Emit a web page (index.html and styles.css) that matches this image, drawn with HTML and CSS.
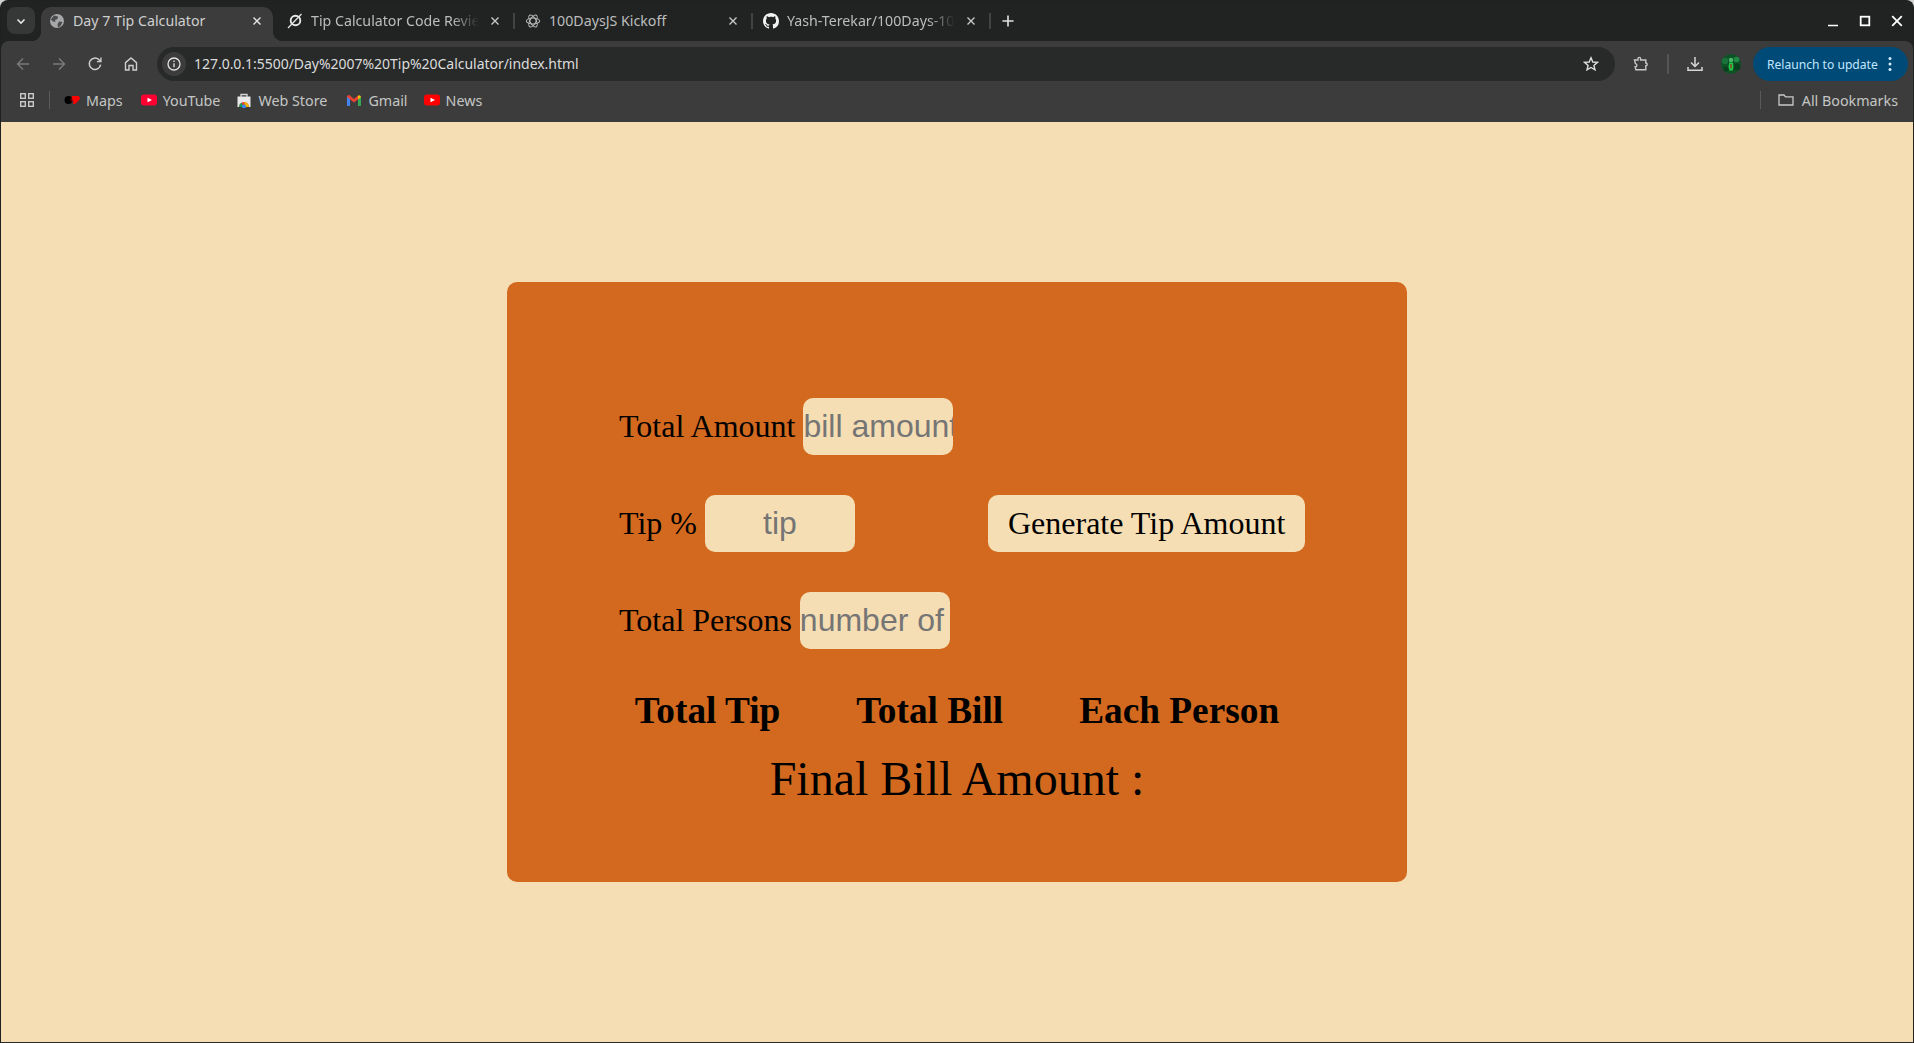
FILE: index.html
```html
<!DOCTYPE html>
<html lang="en">
<head>
<meta charset="utf-8">
<title>Day 7 Tip Calculator</title>
<link rel="stylesheet" href="styles.css">
</head>
<body>
<div class="window">
  <header class="tabstrip">
    <button class="tab-menu" aria-label="Search tabs">
      <svg class="ico12" viewBox="0 0 12 12"><path d="M2.5 4.500 6 8l3.500-3.500" fill="none" stroke="#e3e3e3" stroke-width="1.6"/></svg>
    </button>
    <div class="tabs">
      <div class="tab tab-active">
        <svg class="ico16" viewBox="0 0 16 16"><circle cx="8" cy="8" r="7" fill="#a6a8aa"/><path d="M5 2.500 9 3.500 8.500 6 6 7 6.500 9 4 8.500 1.800 6.500ZM10 8.500l3.500.5-2 4-2.500 1.500-.5-3Z" fill="#4a4c4e"/></svg>
        <span class="tab-title">Day 7 Tip Calculator</span>
        <svg class="ico16" viewBox="0 0 16 16"><path d="M4.500 4.500l7 7m0-7-7 7" stroke="#e3e3e3" stroke-width="1.4"/></svg>
      </div>
      <span class="tab-sep tab-sep-hidden"></span>
      <div class="tab">
        <svg class="ico16" viewBox="0 0 16 16"><circle cx="8.500" cy="7.500" r="4.800" fill="none" stroke="#e6e6e6" stroke-width="1.9"/><path d="M1 15 14.500 1" stroke="#e6e6e6" stroke-width="1.2"/></svg>
        <span class="tab-title tab-fade">Tip Calculator Code Review</span>
        <svg class="ico16" viewBox="0 0 16 16"><path d="M4.500 4.500l7 7m0-7-7 7" stroke="#c8c8c8" stroke-width="1.4"/></svg>
      </div>
      <span class="tab-sep"></span>
      <div class="tab">
        <svg class="ico16" viewBox="0 0 16 16" fill="none" stroke="#b9b9b9" stroke-width="1.1"><ellipse cx="8" cy="8" rx="6.600" ry="3"/><ellipse cx="8" cy="8" rx="6.600" ry="3" transform="rotate(60 8 8)"/><ellipse cx="8" cy="8" rx="6.600" ry="3" transform="rotate(120 8 8)"/></svg>
        <span class="tab-title">100DaysJS Kickoff</span>
        <svg class="ico16" viewBox="0 0 16 16"><path d="M4.500 4.500l7 7m0-7-7 7" stroke="#c8c8c8" stroke-width="1.4"/></svg>
      </div>
      <span class="tab-sep"></span>
      <div class="tab">
        <svg class="ico16" viewBox="0 0 16 16"><path fill="#f2f2f2" d="M8 0C3.58 0 0 3.58 0 8c0 3.54 2.29 6.53 5.47 7.59.4.07.55-.17.55-.38 0-.19-.01-.82-.01-1.49-2.01.37-2.53-.49-2.69-.94-.09-.23-.48-.94-.82-1.13-.28-.15-.68-.52-.01-.53.63-.01 1.08.58 1.23.82.72 1.21 1.87.87 2.33.66.07-.52.28-.87.51-1.07-1.78-.2-3.64-.89-3.64-3.95 0-.87.31-1.59.82-2.15-.08-.2-.36-1.02.08-2.12 0 0 .67-.21 2.2.82.64-.18 1.32-.27 2-.27.68 0 1.36.09 2 .27 1.53-1.04 2.2-.82 2.2-.82.44 1.1.16 1.92.08 2.12.51.56.82 1.27.82 2.15 0 3.07-1.87 3.75-3.65 3.95.29.25.54.73.54 1.48 0 1.07-.01 1.93-.01 2.2 0 .21.15.46.55.38A8.013 8.013 0 0016 8c0-4.420-3.580-8-8-8z"/></svg>
        <span class="tab-title tab-fade">Yash-Terekar/100Days-100Projects</span>
        <svg class="ico16" viewBox="0 0 16 16"><path d="M4.500 4.500l7 7m0-7-7 7" stroke="#c8c8c8" stroke-width="1.4"/></svg>
      </div>
      <span class="tab-sep"></span>
      <svg class="ico16 new-tab" viewBox="0 0 16 16"><path d="M8 2.500v11M2.500 8h11" stroke="#e3e3e3" stroke-width="1.6"/></svg>
    </div>
    <div class="win-controls">
      <svg class="ico16" viewBox="0 0 16 16"><path d="M3 12.500h10" stroke="#fff" stroke-width="1.6"/></svg>
      <svg class="ico16" viewBox="0 0 16 16"><rect x="3.700" y="3.700" width="8.600" height="8.600" fill="none" stroke="#fff" stroke-width="1.8"/></svg>
      <svg class="ico16" viewBox="0 0 16 16"><path d="M3.200 3.200l9.600 9.600m0-9.600-9.600 9.600" stroke="#fff" stroke-width="1.8"/></svg>
    </div>
  </header>

  <nav class="toolbar">
    <span class="tool"><svg class="ico16" viewBox="0 0 16 16" fill="none" stroke="#7b7b7b" stroke-width="1.4"><path d="M14 8H2.500M8 2.500 2.500 8 8 13.500"/></svg></span>
    <span class="tool"><svg class="ico16" viewBox="0 0 16 16" fill="none" stroke="#7b7b7b" stroke-width="1.4"><path d="M2 8h11.500M8 2.500 13.500 8 8 13.500"/></svg></span>
    <span class="tool"><svg class="ico16" viewBox="0 0 16 16" fill="none" stroke="#cfcfcf" stroke-width="1.5"><path d="M13.600 8.600A5.700 5.700 0 1 1 11.800 3.600L13.600 5"/><path d="M13.900 1.600v4h-4" stroke-width="1.4"/></svg></span>
    <span class="tool"><svg class="ico16" viewBox="0 0 16 16" fill="none" stroke="#cfcfcf" stroke-width="1.4"><path d="M2.500 14V6.600L8 2l5.500 4.600V14H10V9.500H6V14Z"/></svg></span>
    <div class="omnibox">
      <span class="site-info"><svg class="ico16" viewBox="0 0 16 16" fill="none" stroke="#e3e3e3" stroke-width="1.3"><circle cx="8" cy="8" r="6"/><path d="M8 7.200v4M8 4.600v1.400"/></svg></span>
      <span class="url">127.0.0.1:5500/Day%2007%20Tip%20Calculator/index.html</span>
      <svg class="ico16" viewBox="0 0 16 16"><path d="M8 1.800 9.800 6l4.600.4-3.500 3 1.100 4.500L8 11.500 4 13.900l1.100-4.500-3.500-3L6.200 6Z" fill="none" stroke="#dcdcdc" stroke-width="1.4"/></svg>
    </div>
    <span class="tool tool-ext"><svg class="ico16" viewBox="0 0 16 16" fill="none" stroke="#c8c8c8" stroke-width="1.4"><path d="M1.500 4H5V2.700a1.300 1.300 0 0 1 2.600 0V4h5.200v3a1.400 1.400 0 0 1 0 2.800v4H2.800l-.6-3a1.600 1.600 0 0 0 .2-3.200Z"/></svg></span>
    <span class="tool-sep"></span>
    <span class="tool"><svg class="ico16" viewBox="0 0 16 16" fill="none" stroke="#d6d6d6" stroke-width="1.5"><path d="M8 1v8.800M4 6.500l4 4 4-4M1 11v3.200h14V11"/></svg></span>
    <span class="tool"><svg class="avatar" viewBox="0 0 20 20"><circle cx="10" cy="10" r="10" fill="#0e5226"/><circle cx="4" cy="7" r="3.200" fill="#17733a"/><circle cx="16" cy="13" r="3.500" fill="#0a3f1e"/><circle cx="15.500" cy="5.500" r="2.800" fill="#1f8a45"/><circle cx="5" cy="15" r="2.500" fill="#0a3f1e"/><circle cx="10" cy="6" r="2.200" fill="#4ab86c"/><path d="M8.300 8.500h3.400l.8 4.500-1 3.500h-3l-1-3.500Z" fill="#1fcf47"/><path d="M9.300 10h1.400v4.500H9.300Z" fill="#8f3a2a"/></svg></span>
    <div class="relaunch">
      <span>Relaunch to update</span>
      <svg class="ico16" viewBox="0 0 16 16"><circle cx="8" cy="2.500" r="1.500" fill="#d6ecff"/><circle cx="8" cy="8" r="1.500" fill="#d6ecff"/><circle cx="8" cy="13.500" r="1.500" fill="#d6ecff"/></svg>
    </div>
  </nav>

  <nav class="bookmarks">
    <svg class="ico16 apps" viewBox="0 0 16 16" fill="none" stroke="#c8c8c8" stroke-width="1.400"><rect x="1.700" y="1.700" width="4.600" height="4.600"/><rect x="9.700" y="1.700" width="4.600" height="4.600"/><rect x="1.700" y="9.700" width="4.600" height="4.600"/><rect x="9.700" y="9.700" width="4.600" height="4.600"/></svg>
    <span class="bm-sep"></span>
    <a class="bm bm-maps"><svg class="ico16" viewBox="0 0 16 16"><circle cx="4.500" cy="8" r="4" fill="#000"/><path d="M8 4h6a2.500 2.500 0 0 1 1.500 3.500L11 12H9l.5-3H7Z" fill="#f00"/><path d="M6.500 6.500h2v3h-2Z" fill="#600"/></svg>Maps</a>
    <a class="bm bm-yt"><svg class="ico16" viewBox="0 0 16 16"><rect y="2.500" width="16" height="11" rx="3" fill="#ff0033"/><path d="M6.500 5.700 11 8l-4.500 2.300Z" fill="#fff"/></svg>YouTube</a>
    <a class="bm bm-store"><svg class="ico16" viewBox="0 0 16 16"><path d="M1.500 4.500h13V15h-13Z" fill="#e8e8e8"/><path d="M5 5V2.500h6V5" fill="none" stroke="#d8d8d8" stroke-width="1.300"/><path d="M3 15a5 5 0 0 1 10 0Z" fill="#db4437"/><path d="M8 10a5 5 0 0 1 5 5H9.500Z" fill="#f4b400"/><path d="M3 15a5 5 0 0 1 2.500-4.300L7.500 15Z" fill="#0f9d58"/><circle cx="8" cy="14.500" r="2" fill="#4285f4"/></svg>Web Store</a>
    <a class="bm bm-gmail"><svg class="ico16" viewBox="0 0 16 16"><path d="M1 4.500h3V14H2a1 1 0 0 1-1-1Z" fill="#4285f4"/><path d="M12 14V4.500h3V13a1 1 0 0 1-1 1Z" fill="#34a853"/><path d="M1 5a1.800 1.800 0 0 1 3-1.400L8 7l4-3.400 .5 3.400L8 10.500 1 5Z" fill="#ea4335"/><path d="M12 3.700A1.800 1.800 0 0 1 15 5L12 7.500Z" fill="#fbbc04"/></svg>Gmail</a>
    <a class="bm bm-news"><svg class="ico16" viewBox="0 0 16 16"><rect y="2.500" width="16" height="11" rx="3" fill="#f00"/><path d="M6.500 5.700 11 8l-4.500 2.300Z" fill="#fff"/></svg>News</a>
    <span class="bm-sep bm-sep-right"></span>
    <a class="bm bm-all"><svg class="ico16" viewBox="0 0 16 16"><path d="M1 13V3h5l1.500 1.800H15V13Z" fill="none" stroke="#c8c8c8" stroke-width="1.300"/></svg>All Bookmarks</a>
  </nav>

  <main class="page">
    <section class="card">
      <div class="row">
        <label class="field-label" for="bill">Total Amount</label>
        <input class="field" id="bill" type="text" placeholder="bill amount">
      </div>
      <div class="row">
        <label class="field-label" for="tip">Tip %</label>
        <input class="field" id="tip" type="text" placeholder="tip">
        <button class="generate">Generate Tip Amount</button>
      </div>
      <div class="row">
        <label class="field-label" for="persons">Total Persons</label>
        <input class="field" id="persons" type="text" placeholder="number of persons">
      </div>
      <div class="totals">
        <h2 class="total">Total Tip</h2>
        <h2 class="total">Total Bill</h2>
        <h2 class="total">Each Person</h2>
      </div>
      <p class="final">Final Bill Amount :</p>
    </section>
  </main>
</div>
</body>
</html>
```
FILE: styles.css
```css
* { box-sizing: border-box; }
html, body { height: 100%; margin: 0; }
body { background: #d0d0d0; overflow: hidden; }

.window {
  height: 1043px;
  display: flex;
  flex-direction: column;
  border: 1px solid #1f2120;
  border-bottom-color: #2a2a2a;
  border-radius: 8px 8px 0 0;
  overflow: hidden;
  background: #202322;
  font-family: "Noto Sans", sans-serif;
  font-size: 14.2px;
  color: #c7c7c7;
}
.ico12 { width: 12px; height: 12px; flex: none; display: block; }
.ico16 { width: 16px; height: 16px; flex: none; display: block; }

/* tab strip */
.tabstrip { height: 40px; flex: none; display: flex; align-items: flex-end; padding-left: 6px; background: #202322; }
.tab-menu {
  width: 28px; height: 27px; margin-bottom: 7px; padding: 0; border: 0; border-radius: 8px;
  background: #363837; display: flex; align-items: center; justify-content: center;
}
.tabs { display: flex; align-items: center; height: 34px; margin-left: 6px; }
.tab { width: 232px; height: 34px; display: flex; align-items: center; gap: 8px; padding: 0 8px 6px; position: relative; color: #bdbdbd; }
.tab-title { flex: 1; min-width: 0; white-space: nowrap; overflow: hidden; margin-bottom: 1px; }
.tab-fade { -webkit-mask-image: linear-gradient(90deg, #000 84%, transparent 100%); mask-image: linear-gradient(90deg, #000 84%, transparent 100%); }
.tab-active { background: #3c3c3c; border-radius: 10px 10px 0 0; color: #cfcfcf; }
.tab-active::before, .tab-active::after {
  content: ""; position: absolute; bottom: 0; width: 10px; height: 10px;
}
.tab-active::before { left: -10px; background: radial-gradient(circle at 0 0, transparent 10px, #3c3c3c 10.5px); }
.tab-active::after { right: -10px; background: radial-gradient(circle at 100% 0, transparent 10px, #3c3c3c 10.5px); }
.tab-sep { width: 2px; height: 16px; margin: 0 2px 6px; background: #424443; flex: none; }
.tab-sep-hidden { background: transparent; }
.new-tab { margin: 0 0 6px 7px; }
.win-controls { margin-left: auto; height: 34px; margin-bottom: 3px; display: flex; align-items: center; gap: 16px; padding-right: 8px; }

/* toolbar */
.toolbar { height: 46px; flex: none; display: flex; align-items: center; padding: 0 5px 0 4px; background: #3c3c3c; border-radius: 8px 8px 0 0; }
.tool { width: 36px; height: 34px; flex: none; display: flex; align-items: center; justify-content: center; }
.tool-ext { margin-left: 8px; }
.tool-sep { width: 2px; height: 20px; margin: 0 8px; background: #555; flex: none; }
.omnibox {
  flex: 1; min-width: 0; height: 34px; margin-left: 8px; padding: 0 16px 0 5px;
  display: flex; align-items: center; border-radius: 17px; background: #282a29;
}
.site-info { width: 24px; height: 24px; flex: none; display: flex; align-items: center; justify-content: center; border-radius: 50%; background: #3c3c3c; }
.url { margin-left: 8px; flex: 1; color: #dcdcdc; font-size: 14px; margin-bottom: 1px; letter-spacing: -0.03px; }
.avatar { width: 20px; height: 20px; display: block; }
.relaunch {
  width: 155px; height: 34px; margin-left: 4px; flex: none; padding: 0 10px 0 14px;
  display: flex; align-items: center; justify-content: space-between;
  border-radius: 17px; background: #004a77; color: #c2e7ff; font-size: 12.1px;
}

/* bookmarks */
.bookmarks { height: 35px; flex: none; display: flex; align-items: center; padding: 0 15px 9px 18px; background: #3c3c3c; font-size: 14.3px; }
.apps { margin-right: 14px; }
.bm-sep { width: 1px; height: 18px; background: #5a5a5a; flex: none; }
.bm { display: flex; align-items: center; gap: 6px; color: #c4c7c5; white-space: nowrap; }
.bm-maps { margin-left: 14px; }
.bm-yt { margin-left: 18px; }
.bm-store { margin-left: 16px; }
.bm-gmail { margin-left: 19px; }
.bm-news { margin-left: 16px; }
.bm-sep-right { margin-left: auto; }
.bm-all { margin-left: 17px; gap: 8px; }

/* page */
.page { flex: 1; min-height: 0; display: flex; align-items: center; justify-content: center; background: #f5deb3; }
.card {
  width: 900px; height: 600px; padding: 116px 0 0;
  border-radius: 10px; background: #d2691e; color: #000;
  font-family: "Liberation Serif", serif;
}
.row { display: flex; align-items: center; gap: 8px; padding-left: 112px; margin-bottom: 40px; font-size: 32px; }
.field-label { font-size: 32px; }
.field {
  width: 150px; height: 57px; padding: 0; border: 0; border-radius: 10px;
  background: #f5deb3; text-align: center;
  font-family: "Liberation Sans", sans-serif; font-size: 32px;
}
.generate {
  height: 57px; margin-left: 125px; padding: 0 20px; border: 0; border-radius: 10px;
  background: #f5deb3; color: #000; font-family: "Liberation Serif", serif; font-size: 32px;
}
.totals { display: flex; justify-content: center; gap: 76px; }
.total { margin: 0; font-size: 37.3px; font-weight: 700; }
.final { margin: 19px 0 0; text-align: center; font-size: 48px; }
```
